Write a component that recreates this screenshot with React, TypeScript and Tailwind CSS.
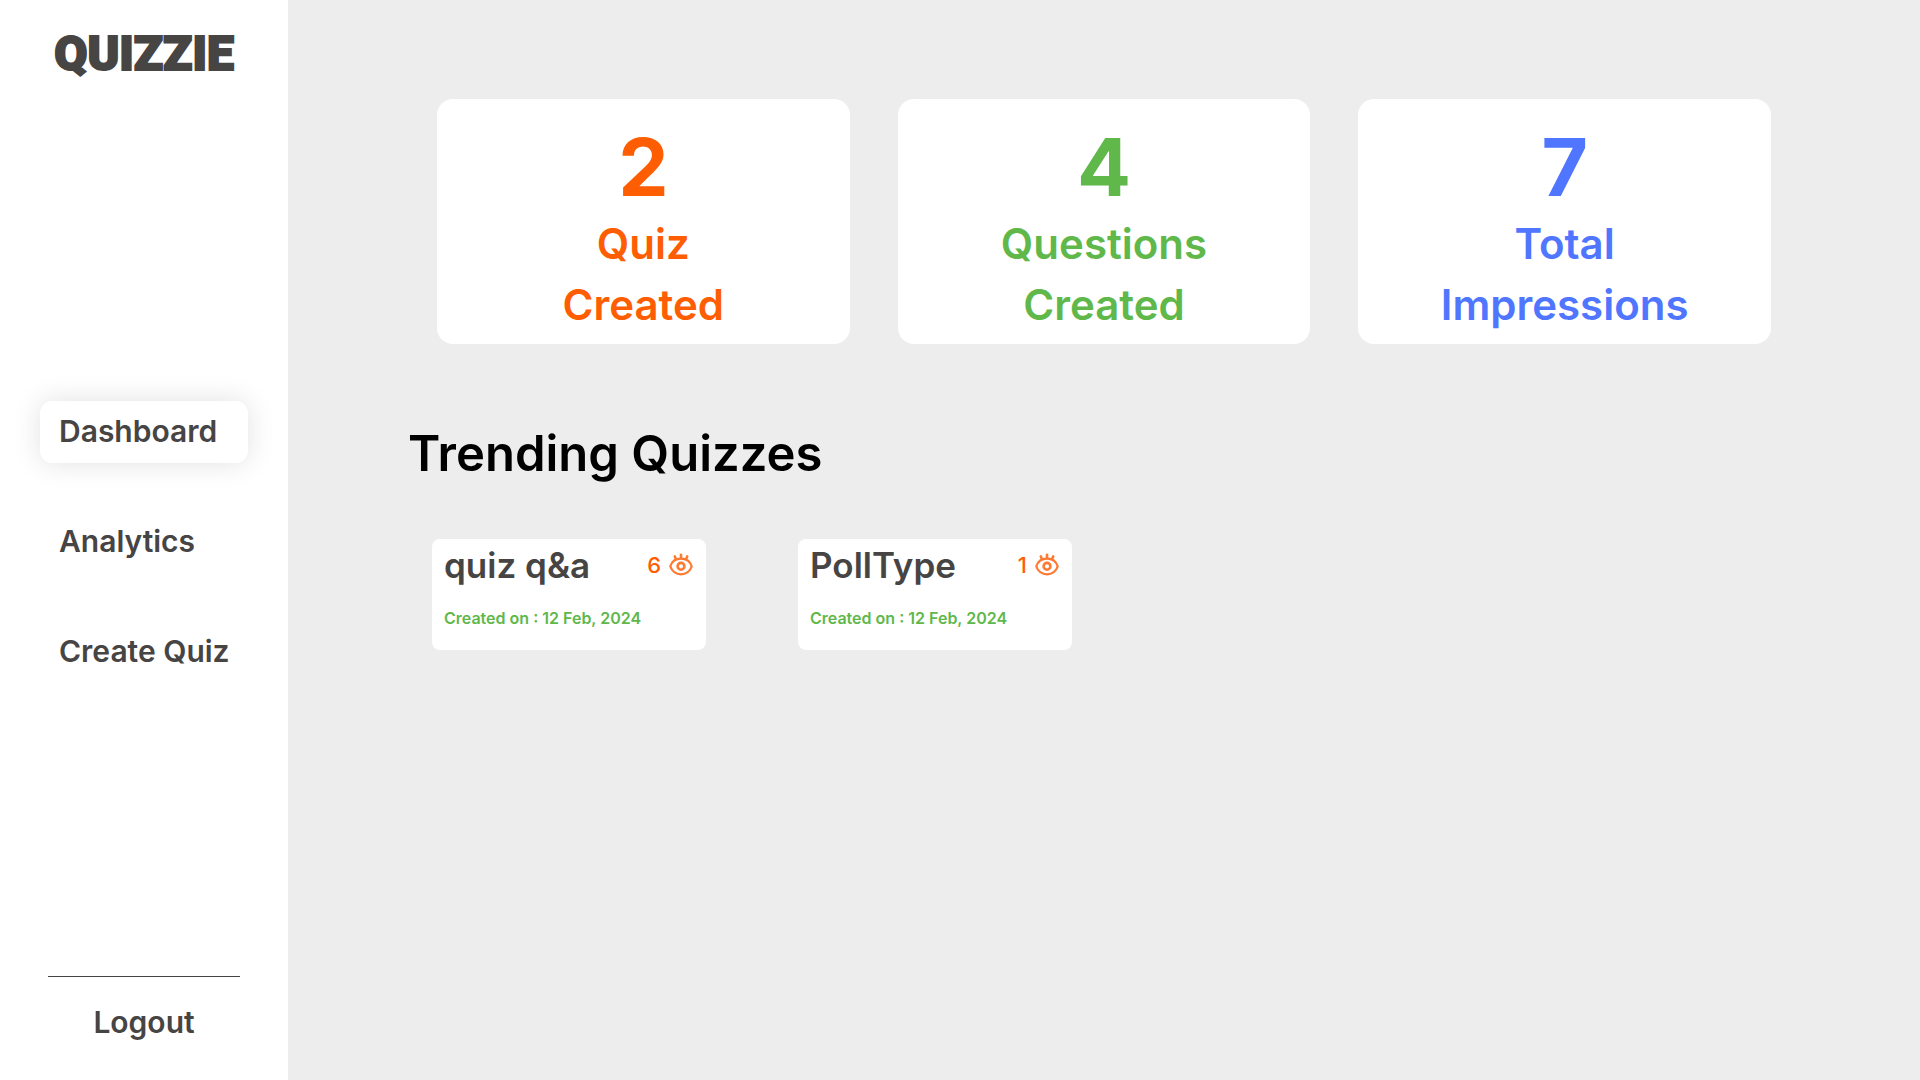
const navItems = [
  { label: 'Dashboard', active: true },
  { label: 'Analytics', active: false },
  { label: 'Create Quiz', active: false },
];

const stats = [
  { value: 2, top: 'Quiz', bottom: 'Created', color: 'text-[#ff5d01]' },
  { value: 4, top: 'Questions', bottom: 'Created', color: 'text-[#60b84b]' },
  { value: 7, top: 'Total', bottom: 'Impressions', color: 'text-[#5076ff]' },
];

const quizzes = [
  { name: 'quiz q&a', views: 6, created: '12 Feb, 2024' },
  { name: 'PollType', views: 1, created: '12 Feb, 2024' },
];

function EyeIcon() {
  return (
    <svg viewBox="0 0 24 24" className="h-6 w-6" fill="none" stroke="#ff7a30" strokeLinecap="round" aria-hidden="true">
      <path d="M1.300 13.300C2.800 8.600 7 5.600 12 5.600s9.200 3 10.700 7.700C21.200 18 17 21.300 12 21.300S2.800 18 1.300 13.300Z" strokeWidth="2.200" strokeLinejoin="round" />
      <circle cx="12" cy="13.300" r="3.400" strokeWidth="2.600" />
      <path d="M12 5V1.700M6.900 6 5.800 3.400M17.100 6l1.100-2.600" strokeWidth="2.600" />
    </svg>
  );
}

function Sidebar() {
  return (
    <aside className="grid w-[15%] shrink-0 grid-cols-1 grid-rows-[1fr_auto_1fr] bg-white text-[#474444]">
      <div className="pt-6 text-center font-['Roboto',sans-serif] text-5xl leading-[60px] font-black [-webkit-text-stroke:2px_#474444]">
        QUIZZIE
      </div>
      <nav className="flex flex-col gap-12 px-10 pt-1">
        {navItems.map((item) => (
          <button
            key={item.label}
            type="button"
            className={
              item.active
                ? 'rounded-xl bg-white pt-2.5 pr-2 pb-3 pl-[19px] text-left text-[30px] leading-10 font-semibold whitespace-nowrap shadow-[0_0_28px_rgba(0,0,0,0.12)]'
                : 'rounded-xl pt-2.5 pr-2 pb-3 pl-[19px] text-left text-[30px] leading-10 font-semibold whitespace-nowrap'
            }
          >
            {item.label}
          </button>
        ))}
      </nav>
      <div className="mx-12 flex flex-col self-end pb-[38px]">
        <hr className="border-[#474444]" />
        <button type="button" className="mt-[25px] text-[30px] leading-10 font-semibold">
          Logout
        </button>
      </div>
    </aside>
  );
}

export default function App() {
  return (
    <div className="flex min-h-screen bg-[#ededed] font-['Inter',sans-serif]">
      <Sidebar />
      <main className="flex-1 pt-[99px]">
        <section className="mx-[149px] grid grid-cols-3 gap-12">
          {stats.map((s) => (
            <div key={s.value} className={'flex flex-col items-center rounded-2xl bg-white pt-[22px] pb-[9px] ' + s.color}>
              <span className="text-[80px] leading-[92px] font-bold">{s.value}</span>
              <span className="text-[42px] leading-[61px] font-semibold">{s.top}</span>
              <span className="text-[42px] leading-[61px] font-semibold">{s.bottom}</span>
            </div>
          ))}
        </section>
        <section className="mt-20 pl-[120px]">
          <h1 className="text-[49px] leading-[60px] font-semibold text-black">Trending Quizzes</h1>
          <div className="mt-[55px] flex flex-wrap gap-[92px] pl-6">
            {quizzes.map((q) => (
              <article key={q.name} className="w-[274px] rounded-lg bg-white pt-[5px] pr-[13px] pb-5 pl-3">
                <div className="flex items-center justify-between">
                  <h2 className="text-[35px] leading-[42px] font-semibold text-[#474444]">{q.name}</h2>
                  <div className="flex items-center gap-2 text-[22px] leading-10 font-medium text-[#ff5d01]">
                    {q.views}
                    <EyeIcon />
                  </div>
                </div>
                <p className="mt-5 text-base leading-6 font-semibold text-[#60b84b]">Created on : {q.created}</p>
              </article>
            ))}
          </div>
        </section>
      </main>
    </div>
  );
}
